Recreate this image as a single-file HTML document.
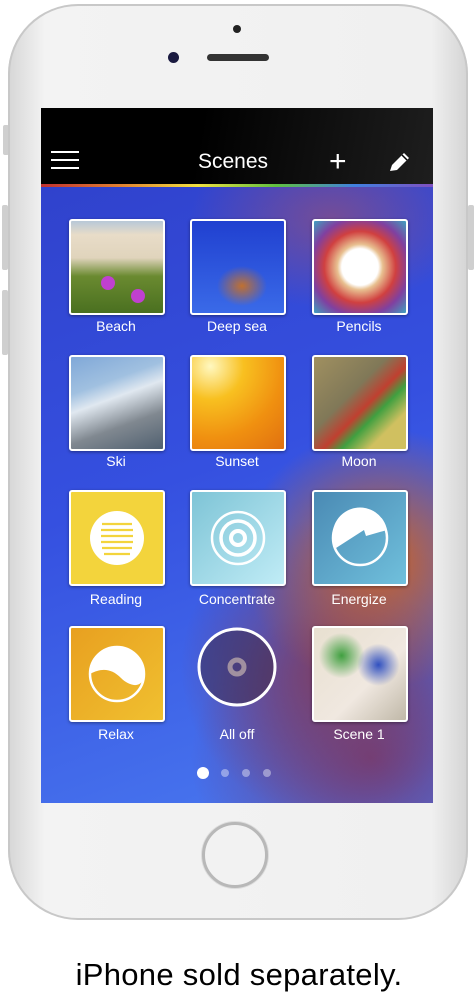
<!DOCTYPE html>
<html><head><style>
body{margin:0;width:475px;height:1000px;background:#fff;position:relative;overflow:hidden;font-family:"Liberation Sans",sans-serif}
.phone{position:absolute;left:8px;top:4px;width:460px;height:916px;border-radius:70px;background:linear-gradient(90deg,#d6d6d6,#f3f3f3 8%,#f0f0f0 92%,#d4d4d4);box-shadow:inset 0 0 0 2px #c8c8c8}
.btn{position:absolute;background:#cfcfcf;width:6px;border-radius:2px}
.screen{position:absolute;left:41px;top:108px;width:392px;height:695px;overflow:hidden;background:
radial-gradient(ellipse 140px 130px at 340px 450px,rgba(210,100,30,.95),rgba(210,100,30,0)),
radial-gradient(ellipse 150px 150px at 290px 560px,rgba(130,60,90,.9),rgba(130,60,90,0)),
radial-gradient(ellipse 180px 160px at 330px 650px,rgba(120,50,100,.8),rgba(120,50,100,0)),
radial-gradient(ellipse 140px 90px at 290px 110px,rgba(160,80,110,.6),rgba(160,80,110,0)),
linear-gradient(160deg,#2f3fc8,#3550e0 50%,#4a7af0)}
.hdr{position:absolute;left:0;top:0;width:392px;height:76px;background:linear-gradient(100deg,#000 40%,#1e1e1e)}
.rb{position:absolute;left:0;top:76px;width:392px;height:3px;background:linear-gradient(90deg,#c03030,#e08030,#f0e040,#60c040,#4080e0,#8050c0)}
.t{position:absolute;width:92px;height:92px;border:2px solid #fff;border-radius:3px;box-shadow:0 1px 3px rgba(0,0,0,.4)}
.l{position:absolute;width:120px;text-align:center;color:#fff;font-size:14px}
.dot{position:absolute;width:8px;height:8px;border-radius:50%;background:rgba(255,255,255,.4);top:661px}
</style></head><body>
<div class="btn" style="left:3px;top:125px;height:30px"></div>
<div class="btn" style="left:2px;top:205px;height:65px"></div>
<div class="btn" style="left:2px;top:290px;height:65px"></div>
<div class="btn" style="left:468px;top:205px;height:65px"></div>
<div class="phone"></div>
<div style="position:absolute;left:233px;top:25px;width:8px;height:8px;border-radius:50%;background:#222"></div>
<div style="position:absolute;left:168px;top:52px;width:11px;height:11px;border-radius:50%;background:#1a1a40"></div>
<div style="position:absolute;left:207px;top:54px;width:62px;height:7px;border-radius:4px;background:#333"></div>
<div class="screen">
<div class="hdr">
<div style="position:absolute;left:10px;top:43px;width:28px">
<div style="height:2px;background:#fff;margin-bottom:6px"></div><div style="height:2px;background:#fff;margin-bottom:6px"></div><div style="height:2px;background:#fff"></div></div>
<div style="position:absolute;left:157px;top:42px;color:#fff;font-size:21px">Scenes</div>
<div style="position:absolute;left:288px;top:44px;color:#fff;font-size:30px;line-height:20px;font-weight:300">+</div>
<svg style="position:absolute;left:347px;top:43px" width="24" height="22" viewBox="0 0 24 22"><path d="M2 20 L4 14 L16 2 L21 7 L9 19 Z" fill="#fff"/><path d="M14 4 L19 9" stroke="#000" stroke-width="1.5"/></svg>
</div>
<div class="rb"></div>
<div class="t" style="left:28px;top:111px;background:linear-gradient(180deg,#b8c8d8 0,#e8dcc8 15%,#e0d4bc 40%,#6a8a30 60%,#4a7020)"><div style="position:absolute;left:30px;top:55px;width:14px;height:14px;border-radius:50%;background:#c040d0"></div><div style="position:absolute;left:60px;top:68px;width:14px;height:14px;border-radius:50%;background:#c040d0"></div></div>
<div class="t" style="left:149px;top:111px;background:radial-gradient(ellipse 25px 20px at 50px 65px,#c07030,#c0703000),linear-gradient(#2040d0,#3a6ae8)"></div>
<div class="t" style="left:271px;top:111px;background:radial-gradient(circle at 50% 50%,#fff 0,#fff 28%,#e8c090 35%,#d04040 55%,#8040a0 75%,#40a0c0)"></div>
<div class="l" style="left:15px;top:210px">Beach</div>
<div class="l" style="left:136px;top:210px">Deep sea</div>
<div class="l" style="left:258px;top:210px">Pencils</div>
<div class="t" style="left:28px;top:247px;background:linear-gradient(160deg,#80a8d8 0,#a0c0e0 30%,#e0e8f0 45%,#808890 70%,#506070)"></div>
<div class="t" style="left:149px;top:247px;background:radial-gradient(circle at 20% 10%,#fff8c0,#f8c020 30%,#f09010 65%,#e07010)"></div>
<div class="t" style="left:271px;top:247px;background:linear-gradient(135deg,#a09060,#807858 40%,#c04030 55%,#40a040 65%,#d0c060 80%)"></div>
<div class="l" style="left:15px;top:345px">Ski</div>
<div class="l" style="left:136px;top:345px">Sunset</div>
<div class="l" style="left:258px;top:345px">Moon</div>
<div class="t" style="left:28px;top:382px;background:#f3d43c"><svg width="92" height="92"><circle cx="46" cy="46" r="27" fill="#fff"/><g stroke="#f3d43c" stroke-width="2.2"><path d="M31 32h30M30 38h32M30 44h32M30 50h32M31 56h30M33 62h26"/></g></svg></div>
<div class="t" style="left:149px;top:382px;background:linear-gradient(135deg,#7ec4d6,#c0ecf6)"><svg width="92" height="92" fill="none" stroke="#fff"><circle cx="46" cy="46" r="26" stroke-width="2.5"/><circle cx="46" cy="46" r="17" stroke-width="3.5"/><circle cx="46" cy="46" r="7" stroke-width="4"/></svg></div>
<div class="t" style="left:271px;top:382px;background:linear-gradient(135deg,#4a8ab4,#70c0dc)"><svg width="92" height="92"><circle cx="46" cy="46" r="27" fill="none" stroke="#fff" stroke-width="2.5"/><path d="M19 48 A27 27 0 0 1 73 38 L52 44 L50 38 L22 56 Z" fill="#fff"/></svg></div>
<div class="l" style="left:15px;top:483px">Reading</div>
<div class="l" style="left:136px;top:483px">Concentrate</div>
<div class="l" style="left:258px;top:483px">Energize</div>
<div class="t" style="left:28px;top:518px;background:linear-gradient(135deg,#e8a020,#f0c030)"><svg width="92" height="92"><circle cx="46" cy="46" r="27" fill="none" stroke="#fff" stroke-width="2.5"/><path d="M19 46 A27 27 0 0 1 73 46 C73 60 60 60 50 50 C40 40 30 40 19 46 Z" fill="#fff"/></svg></div>
<svg style="position:absolute;left:155px;top:518px" width="82" height="82"><circle cx="41" cy="41" r="38" fill="rgba(60,40,70,.5)" stroke="#fff" stroke-width="3"/><circle cx="41" cy="41" r="7" fill="none" stroke="#a090a0" stroke-width="5"/></svg>
<div class="t" style="left:271px;top:518px;background:radial-gradient(circle at 70% 40%,#3050c0 0,#3050c000 25%),radial-gradient(circle at 30% 30%,#40a040,#40a04000 25%),linear-gradient(135deg,#e8e0d0,#f0e8e0 60%,#c0b8a8)"></div>
<div class="l" style="left:15px;top:618px">Relax</div>
<div class="l" style="left:136px;top:618px">All off</div>
<div class="l" style="left:258px;top:618px">Scene 1</div>
<div class="dot" style="left:156px;top:659px;width:12px;height:12px;background:#fff"></div>
<div class="dot" style="left:180px"></div>
<div class="dot" style="left:201px"></div>
<div class="dot" style="left:222px"></div>
</div>
<div style="position:absolute;left:202px;top:822px;width:66px;height:66px;border-radius:50%;background:#f2f2f2;border:3px solid #b8b8b8;box-sizing:border-box;box-shadow:0 0 0 1px #ddd"></div>
<div style="position:absolute;left:0;top:957px;width:478px;text-align:center;font-size:31px;letter-spacing:0.3px;color:#000">iPhone sold separately.</div>
</body></html>
